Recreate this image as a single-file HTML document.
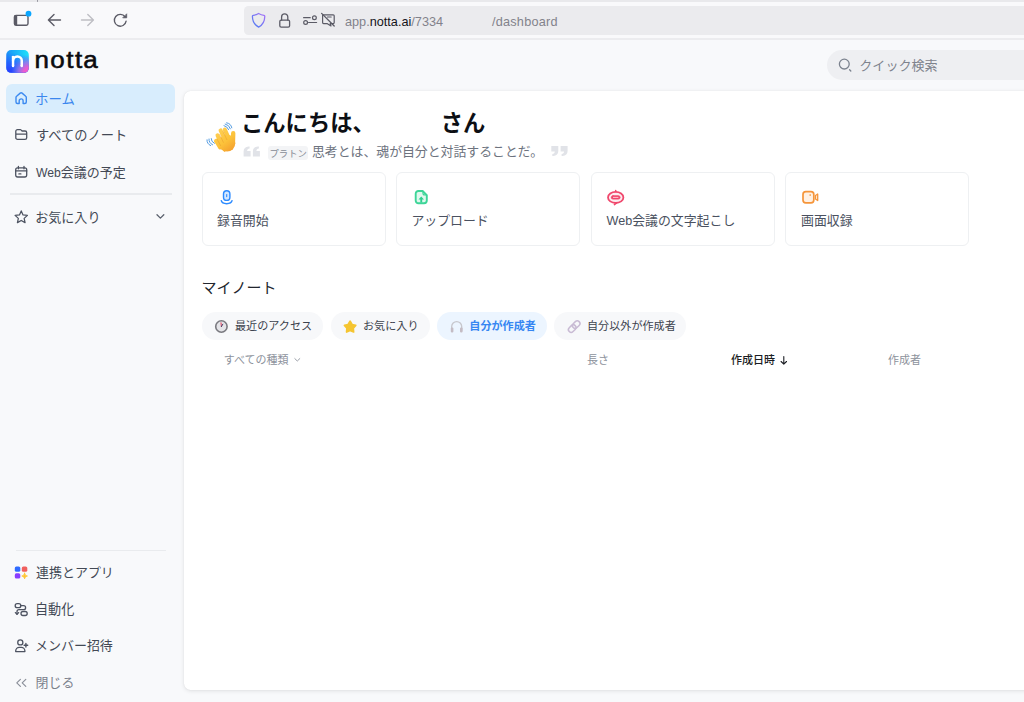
<!DOCTYPE html>
<html lang="ja">
<head>
<meta charset="utf-8">
<title>Notta</title>
<style>
*{box-sizing:border-box;margin:0;padding:0}
html,body{width:1024px;height:702px;overflow:hidden;background:#f8f9fb}
body{position:relative;font-family:"Liberation Sans","Noto Sans CJK JP",sans-serif;color:#1f2937;-webkit-font-smoothing:antialiased}
.abs{position:absolute}
svg{position:absolute;overflow:visible}
.t{position:absolute;white-space:nowrap;line-height:1}
/* browser chrome */
#topstrip{left:0;top:0;width:1024px;height:2px;background:#e9e9ec}
#toolbar{left:0;top:2px;width:1024px;height:36px;background:#f9f9fb}
#tbline{left:0;top:38px;width:1024px;height:2px;background:#ececef}
#urlbar{left:244px;top:5.5px;width:800px;height:29.3px;border-radius:4.5px;background:#ebebee}
.url{font-size:12.7px;color:#82828b;top:16px}
.url b{color:#15141a;font-weight:400}
/* app */
#side-home{left:6px;top:83.5px;width:169px;height:29px;border-radius:6px;background:#d8edfd}
.nav{font-size:13.25px;color:#434955;left:36px}
.sep{height:1.3px;background:#e9ebee}
#panel{left:184px;top:91px;width:900px;height:599px;border-radius:6.5px;background:#fff;box-shadow:0 1px 4px rgba(0,0,0,.10),0 0 1px rgba(0,0,0,.10)}
#search{left:827px;top:50px;width:260px;height:30px;border-radius:15px;background:#eeeff2}
.card{top:172.1px;width:183.7px;height:74px;border:1.4px solid #eef0f2;border-radius:6px;background:#fff}
.clabel{font-size:12.9px;color:#4a5160;top:215.4px}
.pill{top:312px;height:27.5px;border-radius:14px;background:#f7f8fa}
.ptext{font-size:11.1px;color:#3c424d;top:321.1px}
.th{font-size:11px;color:#8d929c;top:355.4px}
</style>
</head>
<body>
<!-- ===== Browser chrome ===== -->
<div class="abs" id="topstrip"></div>
<div class="abs" id="toolbar"></div>
<div class="abs" id="tbline"></div>
<div class="abs" id="urlbar"></div>

<!-- browser toolbar icons -->
<svg style="left:0;top:0" width="360" height="40" viewBox="0 0 360 40" fill="none" stroke="#5b5b66" stroke-width="1.4" stroke-linecap="round" stroke-linejoin="round">
  <line x1="37.5" y1="0" x2="37.5" y2="1.5" stroke="#9a9aa3" stroke-width="1"/>
  <!-- sidebar/tab icon -->
  <rect x="14.4" y="15.4" width="13.6" height="9.8" rx="1.6"/>
  <rect x="14.4" y="15.4" width="2.8" height="9.8" fill="#5b5b66" stroke="none"/>
  <circle cx="28.5" cy="13.7" r="2.9" fill="#0aa6ff" stroke="none"/>
  <!-- back -->
  <path d="M60.5 20H48.6M54 14.6L48.4 20L54 25.4"/>
  <!-- forward -->
  <path d="M81.5 20H93.2M87.8 14.6L93.4 20L87.8 25.4" stroke="#bebec4"/>
  <!-- reload -->
  <path d="M125.1 16.9A5.9 5.9 0 1 0 126.1 21.2" stroke-width="1.35"/>
  <path d="M126.7 14.2V17.8H123.1Z" fill="#5b5b66" stroke-width="0.8"/>
  <!-- shield -->
  <defs><linearGradient id="shg" x1="0" y1="1" x2="1" y2="0"><stop offset="0" stop-color="#4a7cf2"/><stop offset="1" stop-color="#a873f6"/></linearGradient></defs>
  <path d="M258.6 13.5C260.4 14.6 262.4 15.2 264 15.3Q264.8 15.4 264.8 16.2C264.7 21.4 262.8 24.9 258.6 27.1C254.4 24.9 252.5 21.4 252.4 16.2Q252.4 15.4 253.2 15.3C254.8 15.2 256.8 14.6 258.6 13.5Z" stroke="url(#shg)" stroke-width="1.3"/>
  <!-- lock -->
  <rect x="279.8" y="20.2" width="9.8" height="6.9" rx="1.4" stroke-width="1.3"/>
  <path d="M281.6 20V17A3.1 3.1 0 0 1 287.8 17V20" stroke-width="1.3"/>
  <!-- permissions -->
  <path d="M303.6 17.7H310.2M308.6 22.5H316.6" stroke-width="1.2"/>
  <circle cx="314.4" cy="17.7" r="1.9" stroke-width="1.2"/>
  <circle cx="305.6" cy="22.5" r="1.9" stroke-width="1.2"/>
  <!-- blocked autoplay / screen crossed -->
  <path d="M323 14.8H333.2A1 1 0 0 1 334.2 15.8V22.6A1 1 0 0 1 333.2 23.6H330.2L331 26L327 23.6H323.6A1 1 0 0 1 322.6 22.6V15.2" stroke-width="1.2"/>
  <path d="M327.4 17H331.2" stroke-width="1.1"/>
  <path d="M321.6 13.4L334.2 26" stroke-width="1.3"/>
</svg>
<div class="t url" style="left:345px">app.<b>notta.ai</b>/7334</div>
<div class="t url" style="left:492px;letter-spacing:.22px">/dashboard</div>

<!-- ===== Sidebar ===== -->
<div class="abs" id="side-home"></div>

<!-- notta logo -->
<svg style="left:0;top:44px" width="110" height="34" viewBox="0 44 110 34">
  <defs>
    <linearGradient id="lg1" x1="0" y1="0" x2="1" y2="0"><stop offset="0" stop-color="#1a92f7"/><stop offset="1" stop-color="#1fe2fa"/></linearGradient>
    <linearGradient id="lg2" x1="0.15" y1="0" x2="0" y2="1"><stop offset="0.1" stop-color="#2456ff" stop-opacity="0"/><stop offset="0.55" stop-color="#2450ff" stop-opacity="0.75"/><stop offset="1" stop-color="#2c38ff"/></linearGradient>
    <radialGradient id="lg3" cx="1" cy="1" r="0.78"><stop offset="0" stop-color="#f558c8"/><stop offset="0.3" stop-color="#ea5cd0"/><stop offset="0.6" stop-color="#b07ae6" stop-opacity="0.75"/><stop offset="1" stop-color="#7a90f0" stop-opacity="0"/></radialGradient>
  </defs>
  <rect x="6.3" y="50" width="22.5" height="22.8" rx="4.8" fill="url(#lg1)"/>
  <rect x="6.3" y="50" width="22.5" height="22.8" rx="4.8" fill="url(#lg2)"/>
  <rect x="6.3" y="50" width="22.5" height="22.8" rx="4.8" fill="url(#lg3)"/>
  <path d="M13.05 55.9V66" fill="none" stroke="#fff" stroke-width="2.5"/>
  <path d="M13.05 60.6A4.35 4.1 0 0 1 21.75 60.6V66" fill="none" stroke="#fff" stroke-width="2.5"/>
  <path d="M13.05 65.9V66.1M21.75 65.9V66.1" fill="none" stroke="#fff" stroke-width="2.5" stroke-linecap="round"/>
  <text x="30.9 44.9 59.1 66.9 74.3" y="68.4" font-family="'Liberation Sans',sans-serif" font-size="23.2" fill="#0b0b0f" stroke="#0b0b0f" stroke-width="0.55" transform="scale(1.12 1)" id="logotxt">notta</text>
</svg>
<div class="t nav" style="top:92.8px;left:35.1px;font-size:13.4px;color:#3b87ee">ホーム</div>
<div class="t nav" style="top:129.2px">すべてのノート</div>
<div class="t nav" style="top:165.6px;font-size:13px"><span style="font-size:12.2px">Web</span>会議の予定</div>
<div class="abs sep" style="left:10px;top:193.3px;width:161.5px"></div>
<div class="t nav" style="top:211.1px;left:35.2px;font-size:13.05px">お気に入り</div>
<div class="abs sep" style="left:15.6px;top:549.5px;width:150.4px"></div>
<div class="t nav" style="top:566.6px;font-size:12.97px">連携とアプリ</div>
<div class="t nav" style="top:603.4px;left:35px;font-size:13.1px">自動化</div>
<div class="t nav" style="top:640.2px;left:35px;font-size:12.97px">メンバー招待</div>
<div class="t nav" style="top:676.5px;left:35.6px;font-size:12.95px;color:#7b818c">閉じる</div>


<!-- sidebar icons -->
<svg style="left:0;top:84px" width="184" height="150" viewBox="0 84 184 150" fill="none" stroke="#4d5361" stroke-width="1.3" stroke-linecap="round" stroke-linejoin="round">
  <path d="M19.2 103.5H17.5A1.5 1.5 0 0 1 16 102V97.5A1.6 1.6 0 0 1 16.6 96.2L20.2 93.1A1.5 1.5 0 0 1 22.1 93.1L25.7 96.2A1.6 1.6 0 0 1 26.3 97.5V102A1.5 1.5 0 0 1 24.8 103.5H23.1V100.8A1.95 1.95 0 0 0 19.2 100.8Z" stroke="#3c8af0" stroke-width="1.4"/>
  <path d="M15.8 131.3A1.7 1.7 0 0 1 17.5 129.6H20.2A1.4 1.4 0 0 1 21.3 130.1L22.1 131H25A1.7 1.7 0 0 1 26.7 132.7V137.7A1.7 1.7 0 0 1 25 139.4H17.5A1.7 1.7 0 0 1 15.8 137.7ZM15.8 134.2H26.7"/>
  <rect x="15.7" y="167.8" width="11" height="9.2" rx="1.9"/>
  <path d="M18.4 166.4V168.8M24 166.4V168.8M15.7 170.9H26.7M18.9 173.9H20.9"/>
  <path d="M21.25 210.90L23.04 214.93L27.43 215.39L24.15 218.34L25.07 222.66L21.25 220.45L17.43 222.66L18.35 218.34L15.07 215.39L19.46 214.93Z" stroke-width="1.25"/>
  <path d="M157 214.7L160.4 218.1L163.8 214.7" stroke="#5b616d"/>
</svg>
<svg style="left:0;top:556px" width="184" height="146" viewBox="0 556 184 146" fill="none" stroke="#4d5361" stroke-width="1.3" stroke-linecap="round" stroke-linejoin="round">
  <rect x="14.8" y="566.5" width="5.5" height="5.3" rx="1.6" fill="#2f6bff" stroke="none"/>
  <rect x="21.8" y="566.5" width="5.5" height="5.3" rx="1.6" fill="#f0605e" stroke="none"/>
  <rect x="14.8" y="573.3" width="5.5" height="5.3" rx="1.6" fill="#8a3dff" stroke="none"/>
  <path d="M24.6 573.2C25.1 575 25.6 575.5 27.4 576C25.6 576.5 25.1 577 24.6 578.8C24.1 577 23.6 576.5 21.8 576C23.6 575.5 24.1 575 24.6 573.2Z" fill="#ffc533" stroke="#ffc533" stroke-width="0.9" stroke-linejoin="round"/>
  <!-- automation -->
  <rect x="15.2" y="603.7" width="5.6" height="4" rx="2"/>
  <rect x="21" y="611.5" width="6.2" height="4" rx="2"/>
  <path d="M20.8 605.7H23.6A2 2 0 0 1 23.6 609.7H19A2 2 0 0 0 17 611.7V614"/>
  <path d="M15.4 612.6L17 614.4L18.6 612.6" />
  <!-- member invite -->
  <circle cx="20.3" cy="642.4" r="2.55"/>
  <path d="M15.7 651.6V651A3.6 3.6 0 0 1 19.3 647.4H21.3A3.6 3.6 0 0 1 24.9 651V651.6Z"/>
  <path d="M25.9 643.4V647M24.1 645.2H27.7" stroke-width="1.4"/>
  <!-- collapse -->
  <path d="M20.4 679.4L16.8 682.9L20.4 686.4M25.8 679.4L22.2 682.9L25.8 686.4" stroke="#8a8f99" stroke-width="1.15"/>
</svg>

<!-- ===== Header search ===== -->
<div class="abs" id="search"></div>
<div class="t" style="left:859.3px;top:59.3px;font-size:13.05px;color:#7e838d">クイック検索</div>

<!-- ===== Main panel ===== -->
<div class="abs" id="panel"></div>
<div class="t" style="left:241px;top:112.6px;font-size:22.3px;font-weight:700;color:#0d0f14">こんにちは、</div>
<div class="t" style="left:440.7px;top:112.6px;font-size:22.3px;font-weight:700;color:#0d0f14">さん</div>
<div class="abs" style="left:268.2px;top:146.4px;width:39.8px;height:13.6px;border-radius:3px;background:#f3f4f6"></div>
<div class="t" style="left:269.4px;top:148.8px;font-size:9.4px;color:#868b95">プラトン</div>
<div class="t" style="left:312px;top:146px;font-size:12.87px;color:#6d737e">思考とは、魂が自分と対話することだ。</div>

<div class="abs card" style="left:201.9px"></div>
<div class="abs card" style="left:396.4px"></div>
<div class="abs card" style="left:590.9px"></div>
<div class="abs card" style="left:785.4px"></div>
<div class="t clabel" style="left:217px">録音開始</div>
<div class="t clabel" style="left:411.4px">アップロード</div>
<div class="t clabel" style="left:606.5px"><span style="font-size:12.6px">Web</span>会議の文字起こし</div>
<div class="t clabel" style="left:801px">画面収録</div>

<div class="t" style="left:201.4px;top:279.7px;font-size:15px;color:#22262e">マイノート</div>

<div class="abs pill" style="left:202px;width:121px"></div>
<div class="abs pill" style="left:331px;width:99px"></div>
<div class="abs pill" style="left:437px;width:110px;background:#ecf5ff"></div>
<div class="abs pill" style="left:554px;width:132px"></div>
<div class="t ptext" style="left:235px">最近のアクセス</div>
<div class="t ptext" style="left:363px">お気に入り</div>
<div class="t ptext" style="left:469.3px;color:#3686f2;font-weight:700">自分が作成者</div>
<div class="t ptext" style="left:587px">自分以外が作成者</div>

<div class="t th" style="left:223.8px">すべての種類</div>
<div class="t th" style="left:587px">長さ</div>
<div class="t th" style="left:731px;color:#1a1d23;font-weight:500">作成日時</div>
<div class="t th" style="left:888px">作成者</div>

<!-- search icon -->
<svg style="left:830px;top:50px" width="30" height="30" viewBox="830 50 30 30" fill="none" stroke="#7b828e" stroke-width="1.3" stroke-linecap="round">
  <circle cx="844.3" cy="64.1" r="4.9"/>
  <path d="M849.6 69.8L850.8 71"/>
</svg>
<!-- waving hand -->
<svg style="left:200px;top:118px" width="44" height="40" viewBox="200 118 44 40">
  <defs><linearGradient id="hg" gradientUnits="userSpaceOnUse" x1="216" y1="128" x2="234" y2="152"><stop offset="0" stop-color="#ffd258"/><stop offset="0.55" stop-color="#fcc23a"/><stop offset="1" stop-color="#f3992c"/></linearGradient></defs>
  <g stroke="url(#hg)" stroke-linecap="round" fill="url(#hg)">
    <ellipse cx="227.1" cy="143.2" rx="8.2" ry="8.4" stroke="none"/>
    <path d="M214.6 141.6L224.6 151.2L230 146L219 137Z" stroke-width="1.2" stroke-linejoin="round"/>
    <path d="M224.8 129.7L229.5 140" stroke-width="4.1"/>
    <path d="M220.6 130.5L226 142" stroke-width="4.1"/>
    <path d="M217.5 135.4L222 145" stroke-width="4"/>
    <path d="M216 140.7L220 147.6" stroke-width="3.8"/>
    <path d="M233.2 133.3L232.9 143" stroke-width="4.4"/>
  </g>
  <g fill="none" stroke="#e79a2c" stroke-width="0.6" stroke-linecap="round" opacity="0.75">
    <path d="M223.2 131.6L226.8 139.6"/>
    <path d="M219.6 134.4L223.4 142.4"/>
    <path d="M217.2 139.4L220.6 145.6"/>
  </g>
  <g fill="none" stroke="#4493df" stroke-width="1" stroke-linecap="round" opacity="0.9">
    <path d="M224 125.6Q227.2 126.2 228.6 129.6"/>
    <path d="M225.2 124Q229.2 124.8 230.4 128.8"/>
    <path d="M226.6 122.8Q231 123.4 231.8 127.8"/>
    <path d="M211.2 138.6Q211 141.6 214.4 143.4"/>
    <path d="M209 139Q208.6 142.8 212.6 144.8"/>
    <path d="M207 139.8Q206.6 143.6 210.6 145.6"/>
  </g>
</svg>
<!-- quote marks -->
<svg style="left:240px;top:142px" width="340" height="20" viewBox="240 142 340 20" fill="#e1e3e8">
  <g><path d="M243.6 156.4V151.4C243.6 148.4 245.4 146.6 248.6 146.4L249.6 146.4V148.4C248 148.6 247.2 149.4 247.1 151H250.6V156.4Z"/>
  <path d="M252.9 156.4V151.4C252.9 148.4 254.7 146.6 257.9 146.4L258.9 146.4V148.4C257.3 148.6 256.5 149.4 256.4 151H259.9V156.4Z"/></g>
  <g transform="rotate(180 405.6 151.2)"><path d="M243.6 156.4V151.4C243.6 148.4 245.4 146.6 248.6 146.4L249.6 146.4V148.4C248 148.6 247.2 149.4 247.1 151H250.6V156.4Z"/>
  <path d="M252.9 156.4V151.4C252.9 148.4 254.7 146.6 257.9 146.4L258.9 146.4V148.4C257.3 148.6 256.5 149.4 256.4 151H259.9V156.4Z"/></g>
</svg>
<!-- card icons -->
<svg style="left:210px;top:186px" width="620" height="22" viewBox="210 186 620 22" fill="none" stroke-linecap="round" stroke-linejoin="round">
  <rect x="223.5" y="190.7" width="6.4" height="9.7" rx="3.2" stroke="#2d8bff" stroke-width="1.4" fill="#d3e7ff"/>
  <path d="M226.7 194.6V196.6" stroke="#2d8bff" stroke-width="1.1"/>
  <path d="M221.3 200.7A5.4 3.4 0 0 0 232 200.7" stroke="#2d8bff" stroke-width="1.5"/>
  <path d="M418.4 191H422.6L426.8 195.2V200.6A2.7 2.7 0 0 1 424.1 203.3H418.4A2.7 2.7 0 0 1 415.7 200.6V193.7A2.7 2.7 0 0 1 418.4 191Z" stroke="#3dd598" stroke-width="1.9" fill="#e0f8ee"/>
  <path d="M423 191.4V193.6A1.3 1.3 0 0 0 424.3 194.9H426.4" stroke="#3dd598" stroke-width="1.2"/>
  <path d="M418.5 199.5L421.25 196.5L424 199.5H422.2V202.4H420.3V199.5Z" fill="#2ecf8f"/>
  <ellipse cx="615.7" cy="197.4" rx="7.7" ry="5.6" stroke="#f0486d" stroke-width="1.8" fill="#fdecf0"/>
  <path d="M615.7 190.4V191.6M616.4 203.2L614.4 204.6" stroke="#f0486d" stroke-width="1.5"/>
  <rect x="611.3" y="195.7" width="8.8" height="3.4" rx="1.7" fill="#f0486d" stroke="#f0486d" stroke-width="0.8"/>
  <path d="M613.4 197.4H618" stroke="#fbc4d0" stroke-width="1"/>
  <rect x="803" y="191.6" width="10.8" height="11.2" rx="2.8" stroke="#f5953a" stroke-width="1.7" fill="#fff1e4"/>
  <circle cx="810.2" cy="195" r="0.85" fill="#f5953a"/>
  <path d="M815.5 195.5L817.7 194V200.5L815.5 199Z" stroke="#f5953a" stroke-width="1.3" fill="#fff1e4"/>
</svg>
<!-- pill icons -->
<svg style="left:200px;top:312px" width="500" height="56" viewBox="200 312 500 56" fill="none" stroke-linecap="round" stroke-linejoin="round">
  <circle cx="221.4" cy="326.5" r="5.7" stroke="#7a7a80" stroke-width="1.6" fill="#e4e4e8"/>
  <path d="M221.4 326.6L221 322.8" stroke="#e23d5a" stroke-width="1"/>
  <path d="M221.4 326.6L222.8 324.2" stroke="#45456a" stroke-width="1"/>
  <path d="M350.10 321.30L352.04 324.53L355.71 325.38L353.24 328.22L353.57 331.97L350.10 330.50L346.63 331.97L346.96 328.22L344.49 325.38L348.16 324.53Z" fill="#f5c531" stroke="#f5c531" stroke-width="1.8"/>
  <path d="M451.7 330.4V326.6A5 5 0 0 1 461.7 326.6V330.4" stroke="#c7c7cd" stroke-width="1.3"/>
  <rect x="450.8" y="327.4" width="2.6" height="5.2" rx="1.1" fill="#c4bcc4"/>
  <rect x="460" y="327.4" width="2.6" height="5.2" rx="1.1" fill="#c4bcc4"/>
  <g transform="rotate(-45 574.2 326.6)" stroke="#c9bbd4" stroke-width="1.5">
    <rect x="567.2" y="323.9" width="8.4" height="5.4" rx="2.7"/>
    <rect x="572.8" y="323.9" width="8.4" height="5.4" rx="2.7"/>
  </g>
  <path d="M294.8 358.6L297.3 361L299.8 358.6" stroke="#9a9fa8" stroke-width="1"/>
</svg>
<svg style="left:776px;top:352px" width="16" height="16" viewBox="776 352 16 16" fill="none" stroke="#1a1d23" stroke-width="1.1" stroke-linecap="round" stroke-linejoin="round">
  <path d="M783.8 356.6V364M781.1 361.5L783.8 364.2L786.5 361.5"/>
</svg>
</body>
</html>
